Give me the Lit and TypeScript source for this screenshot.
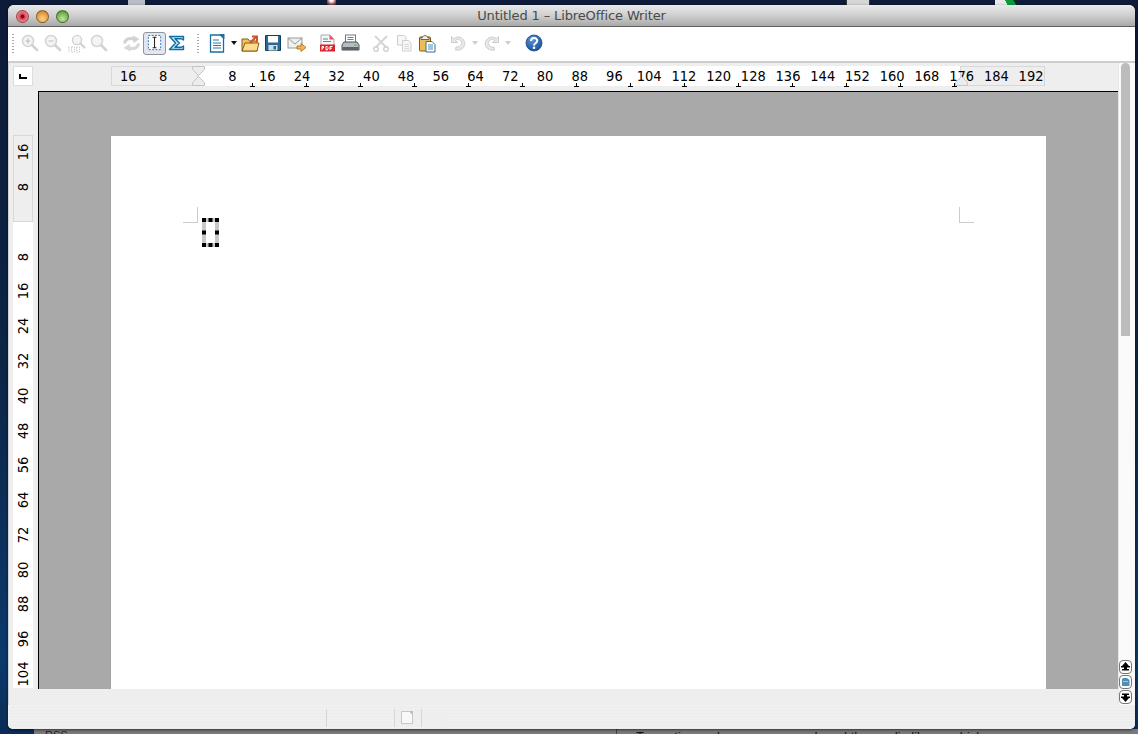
import { LitElement, html, css, svg } from "lit";
import { customElement } from "lit/decorators.js";

const G = "#d2d2d2";
const mag = (inner: unknown, c = G) => svg`
  <circle cx="7" cy="7" r="5.500" fill="#f4f4f4" stroke="${c}" stroke-width="1.400"/>
  <path d="M11 11l5 5" stroke="${c}" stroke-width="2.600" stroke-linecap="round"/>${inner}`;

const icons: Record<string, unknown> = {
  zoomIn: mag(svg`<path d="M4.500 7h5M7 4.500v5" stroke="#bdbdbd" stroke-width="1.200"/>`),
  zoomOut: mag(svg`<path d="M4.500 7h5" stroke="#bdbdbd" stroke-width="1.200"/>`),
  zoom100: svg`<circle cx="10" cy="6" r="4.600" fill="#f4f4f4" stroke="${G}" stroke-width="1.400"/>
    <path d="M13.500 9.500l4 4" stroke="${G}" stroke-width="2.400" stroke-linecap="round"/>
    <path d="M1 13h1v5H1M4.500 13h3v5h-3zM9.500 13h3v5h-3z" fill="none" stroke="#c4c4c4" stroke-dasharray="1.400 1"/>`,
  zoomAll: mag(""),
  refresh: svg`<path d="M2.500 9.500C3 5.500 7 3.500 11.500 5" fill="none" stroke="#d2d2d2" stroke-width="3"/>
    <path d="M10.500 1.500l7 3.500-6 4z" fill="#d2d2d2"/>
    <path d="M16.500 9.500C16 13.500 12 15.500 7.500 14" fill="none" stroke="#d8d8d8" stroke-width="3"/>
    <path d="M8.500 17.500l-7-3.500 6-4z" fill="#d8d8d8"/>`,
  cursor: svg`<rect x="2.500" y="1.500" width="13" height="15" fill="#fff" stroke="#1f6fd0" stroke-dasharray="2 1.500"/>
    <path d="M7 3.500h4M7 14.500h4M9 3.500v11" stroke="#222" stroke-width="1.100" fill="none"/>`,
  sigma: svg`<path d="M1.500 2.500h14v3.500l-2.500-1.300H7l4.500 4.300-4.500 4.300h6l2.500-1.300v3.500h-14l6-6.500z" fill="#bfe3f2" stroke="#0f6ea3" stroke-width="1.400" stroke-linejoin="round"/>`,
  newDoc: svg`<path d="M2.500 1h10l3 3v14h-13z" fill="#fff" stroke="#1b6f9f" stroke-width="1.300"/>
    <path d="M11.500 0h5v5z" fill="#1b6f9f"/>
    <path d="M5 6h6M5 9h8M5 11.500h8M5 14h8" stroke="#2a7cab" stroke-width="1"/>`,
  open: svg`<path d="M1 5h6l1.500 2H16v10H1z" fill="#f3c25f" stroke="#8a5a12"/>
    <path d="M1 17l3-8h14l-2 8z" fill="#fbdc8c" stroke="#8a5a12"/>
    <path d="M9 9l6-6M11 2.500h5v5" fill="none" stroke="#d4502a" stroke-width="2"/>`,
  save: svg`<path d="M1.500 1.500h15v15h-15z" fill="#2b6a94" stroke="#123f5c"/>
    <rect x="4" y="2" width="10" height="6.500" fill="#fff"/><rect x="4.500" y="11" width="9" height="5.500" fill="#d3dde4"/>
    <rect x="9.500" y="12" width="2.500" height="3.500" fill="#2b6a94"/>`,
  mail: svg`<rect x="1" y="4" width="14" height="10" fill="#f0f0f0" stroke="#9a9a9a"/>
    <path d="M1 4l7 6 7-6" fill="none" stroke="#9a9a9a"/>
    <path d="M10 12h4v-2.500l5 4-5 4V15h-4z" fill="#f2b84e" stroke="#a66a14" stroke-width=".8"/>`,
  pdf: svg`<path d="M3 1h9l4 4v7H3z" fill="#f7f7f7" stroke="#a8a8a8"/>
    <path d="M11.500 1l4.500 4.500h-4.500z" fill="#e8505a"/>
    <path d="M5 5h5M5 7.500h8" stroke="#3f8fc0"/>
    <rect x="2" y="10.500" width="15" height="7" rx=".5" fill="#dc2128"/>
    <path d="M4 16v-3.500h1.500v1.500H4M8 12.500v3.500h1.200l.8-1v-1.500l-.8-1zM12 16v-3.500h2.500M12 14.200h2" fill="none" stroke="#fff" stroke-width="1"/>`,
  print: svg`<rect x="4.500" y="1" width="10" height="8" fill="#fff" stroke="#6b7a85"/>
    <path d="M6.500 3.500h6M6.500 5.500h6" stroke="#2f8fc7" stroke-width="1.200"/>
    <path d="M3 8h13l2 3v5H1v-5z" fill="#b5bcc2" stroke="#4a5359"/>
    <rect x="1.500" y="13" width="16" height="3" fill="#5b646a"/><rect x="13.500" y="10.500" width="2" height="1.500" fill="#5fbf3f"/>`,
  cut: svg`<path d="M3 2l11 11M15 2L4 13" stroke="#d6d6d6" stroke-width="2"/>
    <circle cx="4" cy="15" r="2.300" fill="none" stroke="#cfcfcf" stroke-width="1.400"/><circle cx="14" cy="15" r="2.300" fill="none" stroke="#cfcfcf" stroke-width="1.400"/>`,
  copy: svg`<path d="M2.500 1.500h7l1.500 1.500v8h-8.500z" fill="#f7f7f7" stroke="#cfcfcf"/>
    <path d="M7.500 6.500h6l2.500 2.500v8H7.500z" fill="#f7f7f7" stroke="#cfcfcf"/>
    <path d="M9.500 10.500h4.500M9.500 12.500h4.500M9.500 14.500h4.500" stroke="#d8d8d8"/>`,
  paste: svg`<rect x="1.500" y="3" width="11" height="14" rx="1" fill="#eebc58" stroke="#7f5a1a"/>
    <path d="M4.500 3.500C4.500 1 9.500 1 9.500 3.500H11v2H3v-2z" fill="#eee" stroke="#666"/>
    <path d="M8 7.500h6l3 3v7.500H8z" fill="#fff" stroke="#3d6f8e"/>
    <path d="M10 11h5M10 13h5M10 15h5" stroke="#3f8fc0"/>`,
  undo: svg`<path d="M2.500 2.500v6h6L6.300 6.300c3-2 6.700.2 6.200 3.200-.4 2.800-3 4-5.500 3.500l-.5 3c5 1 9-2 9.300-6.300C15.700 4.500 9.500.7 4.700 4.700z" fill="#e8e8e8" stroke="#cdcdcd"/>`,
  redo: svg`<path d="M16.500 2.500v6h-6l2.200-2.200c-3-2-6.700.2-6.200 3.200.4 2.800 3 4 5.500 3.500l.5 3c-5 1-9-2-9.300-6.300C3.300 4.500 9.500.7 14.300 4.700z" fill="#e8e8e8" stroke="#cdcdcd"/>`,
  help: svg`<defs><radialGradient id="hg" cx=".4" cy=".3" r=".8"><stop offset="0" stop-color="#5b93d8"/><stop offset="1" stop-color="#17498f"/></radialGradient></defs>
    <circle cx="9" cy="9" r="8" fill="url(#hg)" stroke="#1a4a8c" stroke-width=".8"/>
    <path d="M6 7c0-4 6.200-4 6.200-.2 0 2.400-3.200 2.400-3.200 4.700" fill="none" stroke="#fff" stroke-width="2"/>
    <rect x="7.900" y="12.600" width="2.300" height="2.300" fill="#fff"/>`,
};

type Item = { i?: string; cls: string };
const groups: Item[][] = [
  [{ cls: "grip" }],
  [{ i: "zoomIn", cls: "btn" }, { i: "zoomOut", cls: "btn" }, { i: "zoom100", cls: "btn" }, { i: "zoomAll", cls: "btn" }],
  [{ i: "refresh", cls: "btn" }, { i: "cursor", cls: "btn on" }, { i: "sigma", cls: "btn" }],
  [{ cls: "grip" }],
  [{ i: "newDoc", cls: "btn" }, { cls: "arrow dark" }, { i: "open", cls: "btn" }, { i: "save", cls: "btn" }, { i: "mail", cls: "btn" }],
  [{ i: "pdf", cls: "btn" }, { i: "print", cls: "btn" }],
  [{ i: "cut", cls: "btn" }, { i: "copy", cls: "btn" }, { i: "paste", cls: "btn" }],
  [{ i: "undo", cls: "btn" }, { cls: "arrow" }, { i: "redo", cls: "btn" }, { cls: "arrow" }],
  [{ i: "help", cls: "btn" }],
];

const hNums = [16, 8, "", 8, 16, 24, 32, 40, 48, 56, 64, 72, 80, 88, 96, 104, 112, 120, 128, 136, 144, 152, 160, 168, 176, 184, 192];
const vNums = [16, 8, "", 8, 16, 24, 32, 40, 48, 56, 64, 72, 80, 88, 96, 104];

@customElement("app-root")
export class AppRoot extends LitElement {
  static styles = css`
    :host { display: block; width: 1138px; height: 734px; position: relative; overflow: hidden;
      background:
        radial-gradient(circle, #9fb2cc 0 .7px, transparent 1px) 13px 2px / 97px 61px,
        radial-gradient(circle, #7f93b3 0 .6px, transparent 1px) 41px 3px / 131px 47px,
        linear-gradient(180deg, #0d1a38 0%, #0c2547 50%, #0a3a6c 90%, #0a2c55 100%);
      font-family: "DejaVu Sans", sans-serif; color: #000; }
    .peek { position: absolute; top: 0; height: 5px; }
    .p1 { left: 128px; width: 17px; background: #b9bcc4; }
    .p2 { left: 327px; width: 9px; background: radial-gradient(circle at 50% 0, #fff 20%, #a55 60%, transparent 100%); }
    .p3 { left: 846px; width: 24px; background: #d6d6d6; border-left: 1px solid #333; border-right: 1px solid #333; box-sizing: border-box; }
    .p4 { left: 995px; width: 25px; background: linear-gradient(60deg, #e8e8e8 45%, #0a9a3a 46%, #0a9a3a 75%, #123 76%); }
    .under { position: absolute; left: 34px; right: 0; top: 729px; height: 5px; background: #7b7b7b; overflow: hidden;
      display: flex; font: 11px "Liberation Sans", sans-serif; color: #222; }
    .under span { white-space: nowrap; }
    .u1 { width: 583px; padding-left: 11px; box-sizing: border-box; border-right: 1px solid #444; }
    .u2 { padding-left: 19px; font-size: 13px; color: #111; }
    .window { position: absolute; left: 8px; top: 5px; width: 1127px; height: 724px; background: #eee;
      border-radius: 6px 6px 5px 5px; overflow: hidden; box-shadow: 0 1px 3px rgba(0,0,0,.6);
      display: flex; flex-direction: column; }
    .title { height: 21px; flex: none; border-bottom: 1px solid #5f5f5f; background: linear-gradient(#e9e9e9, #cfcfcf 50%, #a9a9a9);
      position: relative; display: flex; align-items: center; justify-content: center; font-size: 13px; letter-spacing: -.13px; color: #4a4a4a; }
    .lights { position: absolute; left: 7.500px; top: 4.500px; display: flex; gap: 7px; }
    .light { width: 13px; height: 13px; border-radius: 50%; border: 1px solid rgba(0,0,0,.4); box-sizing: border-box; }
    .red { background: radial-gradient(circle at 50% 50%, #7a0f18 0 22%, #e8485a 30%, #f6a5ac 100%); }
    .amber { background: radial-gradient(circle at 50% 70%, #fbd38a, #d9892c 80%); }
    .green { background: radial-gradient(circle at 50% 70%, #bfe79a, #5fa03c 80%); }
    .toolbar { height: 32px; padding-bottom: 2px; flex: none; background: #fff; border-bottom: 2px solid #cdcdcd; display: flex; align-items: center; padding-left: 4px; }
    .group { display: flex; align-items: center; }
    .g1 { margin-left: 5px; }
    .g2 { margin-left: 9px; }
    .g3 { margin-left: 8px; }
    .g4 { margin-left: 7px; }
    .g5 { margin-left: 8px; }
    .g6 { margin-left: 8px; }
    .g7 { margin-left: 8px; }
    .g8 { margin-left: 10px; }
    .grip { width: 2px; height: 20px; background-image: radial-gradient(circle, #aaa 0.9px, transparent 1px); background-size: 2px 3px; }
    .btn { width: 23px; height: 23px; display: flex; align-items: center; justify-content: center; box-sizing: border-box; border-radius: 2px; }
    .btn svg { width: 19px; height: 19px; }
    .on { background: #e3e6ee; border: 1px solid #8e939c; border-radius: 3px; }
    .on svg { width: 18px; height: 18px; }
    .arrow { width: 10px; display: flex; justify-content: center; }
    .arrow::before { content: ""; border: 3.500px solid transparent; border-top: 4px solid #cfcfcf; border-bottom: 0; }
    .arrow.dark::before { border-top-color: #111; }
    .main { flex: 1; min-height: 0; display: grid; grid-template-columns: 1110px 17px; grid-template-rows: 28px 598px 16px 24px; }
    .rulerRow { background: #eee; display: flex; align-items: flex-start; padding-top: 3px; box-sizing: border-box; box-shadow: inset 1px 0 0 #d0d0d0; }
    .corner { width: 20px; height: 20px; margin-left: 5px; background: #fff; border: 1px solid #ddd; box-sizing: border-box; display: flex; align-items: center; justify-content: center; }
    .corner::before { content: ""; width: 6px; height: 3px; border-left: 2px solid #000; border-bottom: 2px solid #000; }
    .hruler { margin-left: 78px; position: relative; display: flex; height: 20px; }
    .zone { height: 20px; box-sizing: border-box; background: #eee; border: 1px solid #d8d8d8; flex: none; }
    .zl { width: 87px; }
    .zm { width: 762px; background: #fff; border: 0; }
    .zr { width: 85px; }
    .hnums { position: absolute; left: 0; top: 0; height: 20px; display: flex; }
    .hnums span { width: 34.720px; flex: none; text-align: center; font: 14.500px/21px "DejaVu Sans Condensed", "DejaVu Sans", sans-serif; white-space: nowrap; }
    .ticks { position: absolute; left: 87px; top: 17px; display: flex; }
    .ticks i { width: 54px; flex: none; height: 4px; position: relative; }
    .ticks i::before { content: ""; position: absolute; right: -1px; top: 0; width: 1px; height: 3px; background: #000; }
    .ticks i::after { content: ""; position: absolute; right: -3px; top: 3px; width: 5px; height: 1px; background: #000; }
    .handle { position: absolute; width: 13px; }
    .h1 { left: 81px; top: 0; }
    .h2 { left: 844px; top: 0; }
    .docRow { display: flex; min-height: 0; }
    .vside { width: 30px; flex: none; background: #eee; position: relative; display: flex; flex-direction: column; padding: 44px 5px 1px; box-sizing: border-box; overflow: hidden; box-shadow: inset 1px 0 0 #d0d0d0; }
    .vz1 { height: 87px; flex: none; background: #eee; border: 1px solid #d8d8d8; box-sizing: border-box; width: 20px; }
    .vz2 { flex: 1; background: #fff; width: 20px; }
    .vnums { position: absolute; left: 5px; top: 44px; width: 20px; display: flex; flex-direction: column; }
    .vnums span { height: 34.780px; flex: none; display: flex; align-items: center; justify-content: center; font: 14.500px "DejaVu Sans Condensed", "DejaVu Sans", sans-serif; }
    .vnums b { font-weight: 400; transform: rotate(-90deg); white-space: nowrap; }
    .canvas { flex: 1; background: #a9a9a9; border-top: 1px solid #000; border-left: 1px solid #000; padding: 44px 72px 0 72px; box-sizing: border-box; overflow: hidden; display: flex; justify-content: flex-start; }
    .page { width: 935px; height: 100%; background: #fff; position: relative; box-shadow: -1px 0 0 #a2a2a2; padding: 86px 87px 0; box-sizing: border-box; }
    .area { position: relative; height: 100%; padding-left: 4px; box-sizing: border-box; display: flex; align-items: flex-start; }
    .crop { position: absolute; top: -15px; width: 15px; height: 16px; border-bottom: 1px solid #ccc; box-sizing: border-box; }
    .cl { left: -15px; border-right: 1px solid #ccc; }
    .cr { right: -15px; border-left: 1px solid #ccc; }
    .caret { display: block; margin-top: -4px; flex: none; }
    .scroll { grid-column: 2; grid-row: 1 / 4; background: #fafafa; display: flex; flex-direction: column; align-items: center; border-left: 1px solid #e8e8e8; box-sizing: border-box; padding: 0 3px 1px 0; }
    .thumb { width: 9px; height: 273px; background: #bcbcbc; border-radius: 5px 5px 0 0; flex: none; }
    .sbtns { margin-top: auto; display: flex; flex-direction: column; gap: 1px; }
    .sb { width: 13px; height: 14px; background: #fff; border: 1px solid #777; border-radius: 4px; box-sizing: border-box; display: flex; align-items: center; justify-content: center; }
    .sb svg { width: 9px; height: 10px; }
    .stTop { grid-column: 1; grid-row: 3; background: #eee; box-shadow: inset 1px 0 0 #d0d0d0; }
    .stBot { grid-column: 1 / 3; grid-row: 4; background: repeating-linear-gradient(#f0f0f0 0 2px, #ececec 2px 3px); display: flex; align-items: flex-start; padding-left: 318px; padding-top: 4px; box-sizing: border-box; }
    .cell { height: 18px; border-left: 1px solid #d6d6d6; flex: none; }
    .c1 { width: 67px; }
    .c2 { width: 27px; display: flex; justify-content: center; padding: 2px 2px 0 0; box-sizing: border-box; background: #eee; }
    .c3 { width: 25px; background: #eee; }
  `;

  private icon(name: string) {
    return html`<svg viewBox="0 0 19 19">${icons[name]}</svg>`;
  }

  render() {
    return html`
      <div class="peek p1"></div><div class="peek p2"></div><div class="peek p3"></div><div class="peek p4"></div>
      <div class="under"><span class="u1">RSS</span><span class="u2">To continue, please access and read the media library which</span></div>
      <div class="window">
        <div class="title">
          <div class="lights"><div class="light red"></div><div class="light amber"></div><div class="light green"></div></div>
          Untitled 1 – LibreOffice Writer
        </div>
        <div class="toolbar">
          ${groups.map((g, n) => html`<div class="group g${n}">
            ${g.map((it) => html`<div class="${it.cls}">${it.i ? this.icon(it.i) : ""}</div>`)}
          </div>`)}
        </div>
        <div class="main">
          <div class="rulerRow">
            <div class="corner"></div>
            <div class="hruler">
              <div class="zone zl"></div><div class="zone zm"></div><div class="zone zr"></div>
              <div class="hnums">${hNums.map((n) => html`<span>${n}</span>`)}</div>
              <div class="ticks">${Array.from({ length: 14 }, () => html`<i></i>`)}</div>
              <svg class="handle h1" height="20" viewBox="0 0 13 20"><path d="M.5.5h12v3L6.500 9.500.5 3.500zM.5 19.500v-3l6-6 6 6v3z" fill="#ececec" stroke="#c4c4c4"/></svg>
              <svg class="handle h2" height="20" viewBox="0 0 13 20"><path d="M.5 19.500v-3l6-6 6 6v3z" fill="#ececec" stroke="#c4c4c4"/></svg>
            </div>
          </div>
          <div class="docRow">
            <div class="vside">
              <div class="vz1"></div><div class="vz2"></div>
              <div class="vnums">${vNums.map((n) => html`<span><b>${n}</b></span>`)}</div>
            </div>
            <div class="canvas">
              <div class="page">
                <div class="area">
                  <div class="crop cl"></div><div class="crop cr"></div>
                  <svg class="caret" width="17" height="29" viewBox="0 0 17 29">
                    <path d="M2 2h13v25H2z" fill="none" stroke="#c8c8c8" stroke-width="4"/>
                    <path d="M0 0h4v4H0zM6.500 0h4v4h-4zM13 0h4v4h-4zM0 12.500h4v4H0zM13 12.500h4v4h-4zM0 25h4v4H0zM6.500 25h4v4h-4zM13 25h4v4h-4z" fill="#000"/>
                  </svg>
                </div>
              </div>
            </div>
          </div>
          <div class="stTop"></div>
          <div class="scroll">
            <div class="thumb"></div>
            <div class="sbtns">
              <div class="sb"><svg viewBox="0 0 9 10"><path d="M4.500 0L8 4H1zM0 4h9v1.500H0zM3 5.500h3V7h2v1.500H1V7h2z" fill="#000"/></svg></div>
              <div class="sb"><svg viewBox="0 0 9 10"><path d="M1 2.500C1 1.500 2 1 3 1h3l2.500 2v6H1z" fill="#4d8fb8"/><path d="M2 4h5v1H2z" fill="#a7cde0"/></svg></div>
              <div class="sb"><svg viewBox="0 0 9 10"><path d="M1 1.500h7V3H6v1.500H3V3H1zM0 4.500h9V6H0zM4.500 10L1 6h7z" fill="#000"/></svg></div>
            </div>
          </div>
          <div class="stBot">
            <div class="cell c1"></div>
            <div class="cell c2"><svg width="12" height="13" viewBox="0 0 12 13"><path d="M.5.5h8l3 3v9H.5z" fill="#f8f8f8" stroke="#c6c6c6"/><path d="M8 0h4v4z" fill="#bdbdbd"/></svg></div>
            <div class="cell c3"></div>
          </div>
        </div>
      </div>
    `;
  }
}
